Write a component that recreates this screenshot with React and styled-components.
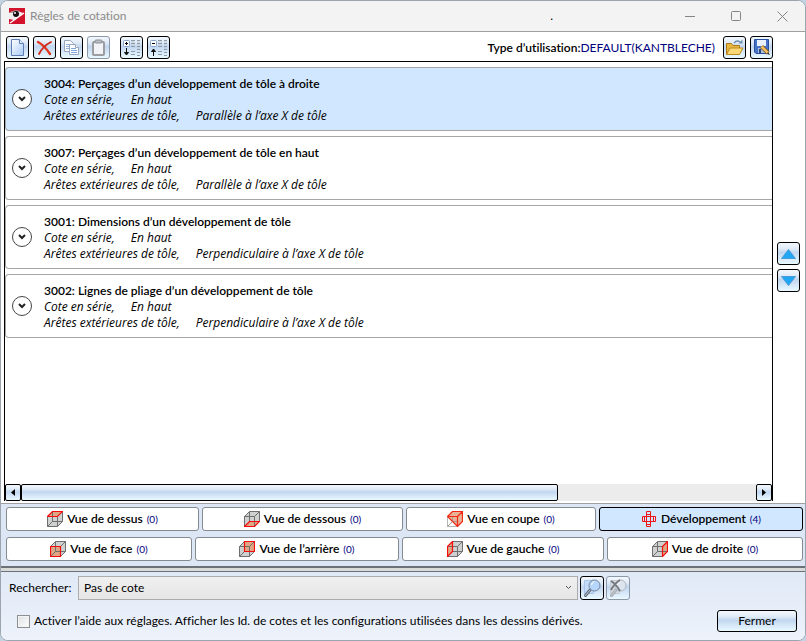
import React, { useState } from "react";
import styled, { createGlobalStyle } from "styled-components";

const GlobalStyle = createGlobalStyle`
  * { box-sizing: border-box; }
  body { margin: 0; background: #c3d3e2; }
  body, button, select, input {
    font-family: Lato, "Open Sans", sans-serif;
    font-size: 12px;
    font-variant-ligatures: none;
    line-height: 16px;
    color: #000;
  }
  button { padding: 0; margin: 0; }
  svg { display: block; flex: none; }
`;

const glossy = "linear-gradient(#f4f8fd 0%, #dfeaf7 28%, #c1d6ef 46%, #d3e5f7 68%, #eaf9ff 100%)";

const Window = styled.div`
  display: flex;
  flex-direction: column;
  min-height: 100vh;
  border: 1px solid #9aa5b0;
  border-radius: 8px;
  overflow: hidden;
  background: #fff;
`;

const TitleBar = styled.header`
  display: flex;
  align-items: center;
  height: 31px;
  flex: none;
  padding-left: 8px;
  background: #f3f3f3;
  border-bottom: 1px solid #a0a0a0;
`;

const Title = styled.h1`
  flex: 1;
  margin: 0 0 0 5px;
  font-size: 12px;
  font-weight: 400;
  color: #8b8b8b;
`;

const Mark = styled.span`
  margin-right: 114px;
  line-height: 24px;
`;

const CaptionButton = styled.button`
  display: grid;
  place-items: center;
  width: 46px;
  height: 30px;
  border: 0;
  background: none;
  color: #858585;
`;

const Toolbar = styled.div`
  display: flex;
  align-items: center;
  gap: 4px;
  padding: 4px 32px 2px 5px;
`;

const IconButton = styled.button`
  display: grid;
  place-items: center;
  width: 23px;
  height: 23px;
  flex: none;
  border: 1px solid ${(p) => (p.disabled ? "#8b98a8" : "#000")};
  border-radius: 3px;
  background: ${glossy};
`;

const ToolGroup = styled.div`
  display: flex;
  gap: 4px;
  margin-right: ${(p) => (p.$spaced ? "6px" : "0")};
`;

const Usage = styled.p`
  flex: 1;
  margin: 0 4px 0 0;
  text-align: right;
  white-space: nowrap;
`;

const UsageLabel = styled.span`
  font-weight: 600;
`;

const UsageValue = styled.span`
  color: #00007d;
`;

const Body = styled.main`
  display: flex;
  flex: 1;
  padding: 0 5px 2px 3px;
`;

const ListPanel = styled.section`
  display: flex;
  flex-direction: column;
  flex: 1;
  min-width: 0;
  border: 1px solid #000;
  border-bottom: 0;
`;

const RuleList = styled.ul`
  display: flex;
  flex-direction: column;
  flex: 1;
  gap: 5px;
  margin: 0;
  padding: 5px 0 0;
  list-style: none;
`;

const RuleItem = styled.li`
  display: flex;
  align-items: center;
  gap: 12px;
  height: 64px;
  padding-left: 6px;
  border: 1px solid #a6a6a6;
  border-right: 0;
  border-radius: 4px 0 0 4px;
  background: ${(p) => (p.$selected ? "#d0e7ff" : "#fff")};
`;

const Expander = styled.button`
  display: grid;
  place-items: center;
  width: 20px;
  height: 20px;
  border: 1px solid #444;
  border-radius: 50%;
  background: #fff;
`;

const RuleText = styled.div`
  padding-top: 2px;
`;

const RuleTitle = styled.div`
  font-weight: 600;
`;

const RuleDetails = styled.div`
  display: flex;
  gap: 16px;
  font-family: "Open Sans", sans-serif;
  font-style: italic;
`;

const ScrollBar = styled.div`
  display: flex;
  height: 17px;
  background: #ececec;
`;

const ScrollArrow = styled.button`
  display: grid;
  place-items: center;
  width: 16px;
  border: 1px solid #000;
  border-radius: 2px;
  background: ${glossy};
`;

const ScrollTrack = styled.div`
  flex: 1;
`;

const ScrollThumb = styled.div`
  width: 73%;
  height: 100%;
  border: 1px solid #000;
  border-radius: 2px;
  background: ${glossy};
`;

const OrderButtons = styled.div`
  display: flex;
  flex-direction: column;
  justify-content: center;
  gap: 4px;
  padding: 0 0 28px 4px;
`;

const Views = styled.nav`
  display: flex;
  flex-direction: column;
  gap: 6px;
  padding: 3px 2px 5px 5px;
  border-top: 1px solid #a0a0a0;
  background: #dce6f4;
`;

const ViewRow = styled.div`
  display: grid;
  grid-template-columns: ${(p) => p.$columns};
  gap: 3px;
`;

const ViewButton = styled.button`
  display: flex;
  align-items: center;
  justify-content: center;
  gap: 4px;
  height: 24px;
  border: 1px solid ${(p) => (p.$active ? "#000" : "#858a90")};
  border-radius: 3px;
  background: ${(p) => (p.$active ? "#d0e7ff" : "#fff")};
  font-weight: 600;
  white-space: nowrap;
`;

const Count = styled.span`
  font-size: 10px;
  font-weight: 400;
  color: #00007d;
`;

const Splitter = styled.div`
  height: 6px;
  border: solid #6c7177;
  border-width: 2px 0 1px;
  background: #d9dbdb;
`;

const Footer = styled.footer`
  display: flex;
  flex-direction: column;
  gap: 10px;
  padding: 4px 8px 8px;
  background: linear-gradient(#e0e9f6, #edf2fb);
`;

const FooterRow = styled.div`
  display: flex;
  align-items: center;
`;

const SearchLabel = styled.label`
  width: 69px;
`;

const SelectBox = styled.div`
  position: relative;
  width: 500px;
  flex: 0 1 auto;
  margin-right: 2px;
`;

const Select = styled.select`
  appearance: none;
  display: block;
  width: 100%;
  height: 24px;
  padding: 0 20px 0 5px;
  border: 1px solid #acacac;
  border-radius: 0;
  background: linear-gradient(#f0f0f0, #e5e5e5);
`;

const SelectArrow = styled.svg`
  position: absolute;
  right: 6px;
  top: 9px;
  pointer-events: none;
`;

const SearchButtons = styled.div`
  display: flex;
  gap: 2px;
`;

const SearchButton = styled(IconButton)`
  width: 24px;
  height: 24px;
`;

const HelpLabel = styled.label`
  display: flex;
  flex: 1;
  align-items: center;
  gap: 4px;
  padding-left: 8px;
`;

const Checkbox = styled.input`
  appearance: none;
  width: 13px;
  height: 13px;
  flex: none;
  margin: 0;
  border: 1px solid #8e8f8f;
  background: linear-gradient(135deg, #dcdfe2, #fff);
  box-shadow: inset 0 0 0 1px #f4f4f4;
  &:checked { background: #2a6fb5; }
`;

const CloseButton = styled.button`
  width: 80px;
  height: 22px;
  border: 1px solid #000;
  border-radius: 3px;
  background: ${glossy};
`;

const FACES = {
  top: "0.5,5.5 5.5,0.5 15.5,0.5 10.5,5.5",
  bottom: "0.5,15.5 5.5,10.5 15.5,10.5 10.5,15.5",
  front: "0.5,5.5 10.5,5.5 10.5,15.5 0.5,15.5",
  back: "5.5,0.5 15.5,0.5 15.5,10.5 5.5,10.5",
  left: "0.5,5.5 5.5,0.5 5.5,10.5 0.5,15.5",
  right: "10.5,5.5 15.5,0.5 15.5,10.5 10.5,15.5",
};

function CubeIcon({ face }) {
  if (face === "section") {
    return (
      <svg width="16" height="16" viewBox="0 0 16 16" aria-hidden="true">
        <path d="M.5 5.5l5-5h10v10l-5 5z" fill="#e9b296" />
        <path d="M.5 5.5v10h10z" fill="#fff" stroke="#b5b5b5" />
        <path d="M.5 15.5l5-5V5.500M5.500 10.500h5" fill="none" stroke="#a99a92" />
        <path d="M.5 5.500l5-5h10v10l-5 5zM.5 5.500h10v10M10.500 5.500l5-5" fill="none" stroke="#f02814" strokeWidth="1.2" />
      </svg>
    );
  }
  return (
    <svg width="16" height="16" viewBox="0 0 16 16" aria-hidden="true">
      <path d="M.5 5.5l5-5h10v10l-5 5H.5z" fill="#cfd1d1" />
      <polygon points={FACES[face]} fill="#e0a684" />
      <g fill="none" stroke="#6e6e6e">
        <path d="M.5 5.5l5-5h10v10l-5 5H.5zM.5 5.5h10v10M10.5 5.5l5-5M5.5.5v10h10M5.5 10.5l-5 5" />
      </g>
      <polygon points={FACES[face]} fill="none" stroke="#f60c0c" strokeWidth="1.2" />
    </svg>
  );
}

function UnfoldIcon() {
  return (
    <svg width="16" height="16" viewBox="0 0 16 16" fill="none" stroke="#f01414" aria-hidden="true">
      <path d="M5.5.5h4v15h-4zM1.5 5.5h13v5h-13zM5.5 3.5h4M5.5 13.5h4M3.500 5.500v5M12.500 5.500v5" />
    </svg>
  );
}

function LogoIcon() {
  return (
    <svg width="16" height="16" viewBox="0 0 16 16" aria-hidden="true">
      <rect width="16" height="16" fill="#d3122b" />
      <path d="M0 5Q6 1 14 5L5 12 0 11z" fill="#f3eeee" />
      <path d="M0 5Q5 1 11 3L5 5z" fill="#b89a98" />
      <circle cx="7" cy="6" r="3" fill="#161012" />
      <circle cx="6" cy="5" r="1" fill="#fff" />
      <path d="M1 15 15 5" stroke="#fff" strokeWidth="1.4" />
    </svg>
  );
}

function NewIcon() {
  return (
    <svg width="17" height="19" viewBox="0 0 17 19" aria-hidden="true">
      <defs>
        <linearGradient id="sheet" x1="0" y1="0" x2="1" y2="1">
          <stop offset="0" stopColor="#fff" />
          <stop offset="1" stopColor="#a9cbf7" />
        </linearGradient>
      </defs>
      <path d="M2.5 1.5h8l4 4v12h-12z" fill="url(#sheet)" stroke="#5f7fb4" />
      <path d="M10.5 1.5v4h4" fill="#e3edfb" stroke="#5f7fb4" />
    </svg>
  );
}

function DeleteIcon() {
  return (
    <svg width="17" height="17" viewBox="0 0 17 17" fill="none" strokeLinecap="round" aria-hidden="true">
      <path d="M2 3Q8 6 14 15" stroke="#e23a22" strokeWidth="2.4" />
      <path d="M15 3Q7 7 3 15" stroke="#cf2a18" strokeWidth="1.8" />
    </svg>
  );
}

function CopyIcon() {
  return (
    <svg width="17" height="17" viewBox="0 0 17 17" fill="#fafcff" stroke="#9aa8bd" aria-hidden="true">
      <path d="M1.5 1.5h6l3 3v8h-9z" />
      <path d="M3 5.5h4M3 7.5h4M3 9.5h4" stroke="#91b4e4" />
      <path d="M6.5 5.5h6l3 3v7h-9z" />
      <path d="M12.5 5.5v3h3" />
      <path d="M8 9.5h5M8 11.5h6M8 13.5h6" stroke="#7fa8e0" />
    </svg>
  );
}

function PasteIcon() {
  return (
    <svg width="17" height="17" viewBox="0 0 17 17" aria-hidden="true">
      <rect x="3" y="3" width="11" height="13" rx="1" fill="#f1f3f6" stroke="#9b9da2" strokeWidth="2" />
      <rect x="5" y="1" width="7" height="3" rx="1" fill="#b9bcc1" stroke="#8d9095" />
    </svg>
  );
}

function TreeIcon({ collapse }) {
  return (
    <svg width="19" height="19" viewBox="0 0 19 19" aria-hidden="true">
      <rect x="1.5" y="2.5" width="6" height="6" rx="1" fill="#fff" stroke="#86a5cd" />
      <path d={collapse ? "M3 5.5h3" : "M3 5.5h3M4.5 4v3"} stroke="#000" />
      {collapse
        ? <path d="M4.5 18v-6M2.500 13.500l2-2.500 2 2.500z" fill="#111" stroke="#111" />
        : <path d="M4.5 10v5M2.500 14.500l2 2.500 2-2.500z" fill="#111" stroke="#111" />}
      <path d="M9 2.5h4M9 5.5h4M9 8.5h4M9 13.5h4M9 16.5h4M15 2.5h3M15 5.5h3M15 8.5h3M15 11.5h3M15 14.5h3M15 17.5h3" stroke="#8d9aaa" />
      <path d="M9 4h4M9 7h4M15 4h3M15 7h3M15 10h3" stroke="#c1cad5" />
    </svg>
  );
}

function OpenIcon() {
  return (
    <svg width="19" height="17" viewBox="0 0 19 17" aria-hidden="true">
      <path d="M1.5 15V4.5h5l1.5 2h6.500V15z" fill="#e9b93f" stroke="#a9781a" />
      <path d="M1.500 15.500 5 9h13l-3.500 6.500z" fill="#fbd876" stroke="#b98a24" />
      <path d="M9 4q3-3.500 6-1" fill="none" stroke="#6e8fae" strokeWidth="1.300" />
      <path d="M13.500 4.500h4v-4z" fill="#6e8fae" />
    </svg>
  );
}

function SaveIcon() {
  return (
    <svg width="18" height="17" viewBox="0 0 18 17" aria-hidden="true">
      <path d="M1.500.5h14v14H3l-1.500-1.500z" fill="#4672c8" stroke="#28509c" />
      <rect x="4" y="1" width="9" height="6" fill="#e9f1fd" />
      <rect x="5" y="9" width="7" height="5" fill="#aebfdd" />
      <rect x="6" y="10" width="2" height="4" fill="#24437f" />
      <path d="M8.500 7.500 15 14" stroke="#7c551b" strokeWidth="4" />
      <path d="M8.500 7.500 15 14" stroke="#f2c061" strokeWidth="2.500" />
      <path d="M15 13l2 3-3-1z" fill="#333" />
    </svg>
  );
}

function SearchIcon({ muted }) {
  return (
    <svg width="20" height="20" viewBox="0 0 20 20" aria-hidden="true">
      <path d="M2.500 2.500h9v13h-9z" fill={muted ? "#d5dce4" : "#c3dbf8"} stroke={muted ? "#c5ccd5" : "#a8c4e7"} />
      <path d="M8 12l-4.500 5.500" stroke={muted ? "#a6acb4" : "#66717f"} strokeWidth="3" strokeLinecap="round" />
      <path d="M8 12l-4.500 5.500" stroke={muted ? "#cbd0d6" : "#b9c4d1"} strokeLinecap="round" />
      <circle cx="12.500" cy="7.500" r="5.500" fill={muted ? "#dce5ee" : "#b4d7fb"} stroke={muted ? "#acb3bb" : "#718096"} />
      <path d="M9.500 7q.5-3 3-3.500" stroke="#fff" fill="none" />
      {muted && <path d="M3 3q5 3 9 10M12 2Q6 6 3 12" fill="none" stroke="#777b80" strokeWidth="2" />}
    </svg>
  );
}

function TriangleIcon({ down }) {
  return (
    <svg width="15" height="10" viewBox="0 0 15 10" aria-hidden="true">
      <path d={down ? "M.5.5h14l-7 9z" : "M.5 9.500h14l-7-9z"} fill="#20a6f2" stroke="#4b9bd8" />
    </svg>
  );
}

const rules = [
  { id: "3004", name: "Perçages d’un développement de tôle à droite", axis: "Parallèle à l’axe X de tôle" },
  { id: "3007", name: "Perçages d’un développement de tôle en haut", axis: "Parallèle à l’axe X de tôle" },
  { id: "3001", name: "Dimensions d’un développement de tôle", axis: "Perpendiculaire à l’axe X de tôle" },
  { id: "3002", name: "Lignes de pliage d’un développement de tôle", axis: "Perpendiculaire à l’axe X de tôle" },
];

const viewRows = [
  {
    columns: "193fr 201fr 190fr 204fr",
    views: [
      { label: "Vue de dessus", face: "top", count: 0 },
      { label: "Vue de dessous", face: "bottom", count: 0 },
      { label: "Vue en coupe", face: "section", count: 0 },
      { label: "Développement", count: 4 },
    ],
  },
  {
    columns: "186fr 204fr 202fr 196fr",
    views: [
      { label: "Vue de face", face: "front", count: 0 },
      { label: "Vue de l’arrière", face: "back", count: 0 },
      { label: "Vue de gauche", face: "left", count: 0 },
      { label: "Vue de droite", face: "right", count: 0 },
    ],
  },
];

export default function App() {
  const [selected, setSelected] = useState("3004");
  const [view, setView] = useState("Développement");

  return (
    <>
      <GlobalStyle />
      <Window>
        <TitleBar>
          <LogoIcon />
          <Title>Règles de cotation</Title>
          <Mark>.</Mark>
          <CaptionButton aria-label="Réduire">
            <svg width="11" height="11" stroke="currentColor"><path d="M0 5.500h10" /></svg>
          </CaptionButton>
          <CaptionButton aria-label="Agrandir">
            <svg width="11" height="11" stroke="currentColor" fill="none"><rect x=".5" y=".5" width="9" height="9" rx="1" /></svg>
          </CaptionButton>
          <CaptionButton aria-label="Fermer la fenêtre">
            <svg width="11" height="11" stroke="currentColor"><path d="M.5.5l10 10M10.500.5l-10 10" /></svg>
          </CaptionButton>
        </TitleBar>

        <Toolbar>
          <ToolGroup $spaced>
            <IconButton aria-label="Nouveau"><NewIcon /></IconButton>
            <IconButton aria-label="Supprimer"><DeleteIcon /></IconButton>
            <IconButton aria-label="Copier"><CopyIcon /></IconButton>
            <IconButton aria-label="Coller" disabled><PasteIcon /></IconButton>
          </ToolGroup>
          <ToolGroup>
            <IconButton aria-label="Tout développer"><TreeIcon /></IconButton>
            <IconButton aria-label="Tout réduire"><TreeIcon collapse /></IconButton>
          </ToolGroup>
          <Usage>
            <UsageLabel>Type d’utilisation:</UsageLabel>
            <UsageValue>DEFAULT(KANTBLECHE)</UsageValue>
          </Usage>
          <ToolGroup>
            <IconButton aria-label="Ouvrir"><OpenIcon /></IconButton>
            <IconButton aria-label="Enregistrer"><SaveIcon /></IconButton>
          </ToolGroup>
        </Toolbar>

        <Body>
          <ListPanel>
            <RuleList>
              {rules.map((rule) => (
                <RuleItem key={rule.id} $selected={rule.id === selected} onClick={() => setSelected(rule.id)}>
                  <Expander aria-label={`Détails ${rule.id}`}>
                    <svg width="8" height="6" fill="none" stroke="#222" strokeWidth="2"><path d="M1 1l3 3 3-3" /></svg>
                  </Expander>
                  <RuleText>
                    <RuleTitle>{rule.id}: {rule.name}</RuleTitle>
                    <RuleDetails><span>Cote en série,</span><span>En haut</span></RuleDetails>
                    <RuleDetails><span>Arêtes extérieures de tôle,</span><span>{rule.axis}</span></RuleDetails>
                  </RuleText>
                </RuleItem>
              ))}
            </RuleList>
            <ScrollBar>
              <ScrollArrow aria-label="Défiler à gauche">
                <svg width="4" height="7"><path d="M4 0v7L0 3.500z" /></svg>
              </ScrollArrow>
              <ScrollTrack><ScrollThumb /></ScrollTrack>
              <ScrollArrow aria-label="Défiler à droite">
                <svg width="4" height="7"><path d="M0 0v7l4-3.500z" /></svg>
              </ScrollArrow>
            </ScrollBar>
          </ListPanel>
          <OrderButtons>
            <IconButton aria-label="Monter"><TriangleIcon /></IconButton>
            <IconButton aria-label="Descendre"><TriangleIcon down /></IconButton>
          </OrderButtons>
        </Body>

        <Views>
          {viewRows.map((row) => (
            <ViewRow key={row.columns} $columns={row.columns}>
              {row.views.map((v) => (
                <ViewButton key={v.label} $active={v.label === view} onClick={() => setView(v.label)}>
                  {v.face ? <CubeIcon face={v.face} /> : <UnfoldIcon />}
                  <span>{v.label}</span>
                  <Count>({v.count})</Count>
                </ViewButton>
              ))}
            </ViewRow>
          ))}
        </Views>

        <Splitter />

        <Footer>
          <FooterRow>
            <SearchLabel htmlFor="search">Rechercher:</SearchLabel>
            <SelectBox>
              <Select id="search"><option>Pas de cote</option></Select>
              <SelectArrow width="7" height="6" fill="none" stroke="#555"><path d="M1 1l2.500 2.500L6 1" /></SelectArrow>
            </SelectBox>
            <SearchButtons>
              <SearchButton aria-label="Rechercher"><SearchIcon /></SearchButton>
              <SearchButton aria-label="Effacer la recherche" disabled><SearchIcon muted /></SearchButton>
            </SearchButtons>
          </FooterRow>
          <FooterRow>
            <HelpLabel>
              <Checkbox type="checkbox" />
              Activer l’aide aux réglages. Afficher les Id. de cotes et les configurations utilisées dans les dessins dérivés.
            </HelpLabel>
            <CloseButton>Fermer</CloseButton>
          </FooterRow>
        </Footer>
      </Window>
    </>
  );
}
